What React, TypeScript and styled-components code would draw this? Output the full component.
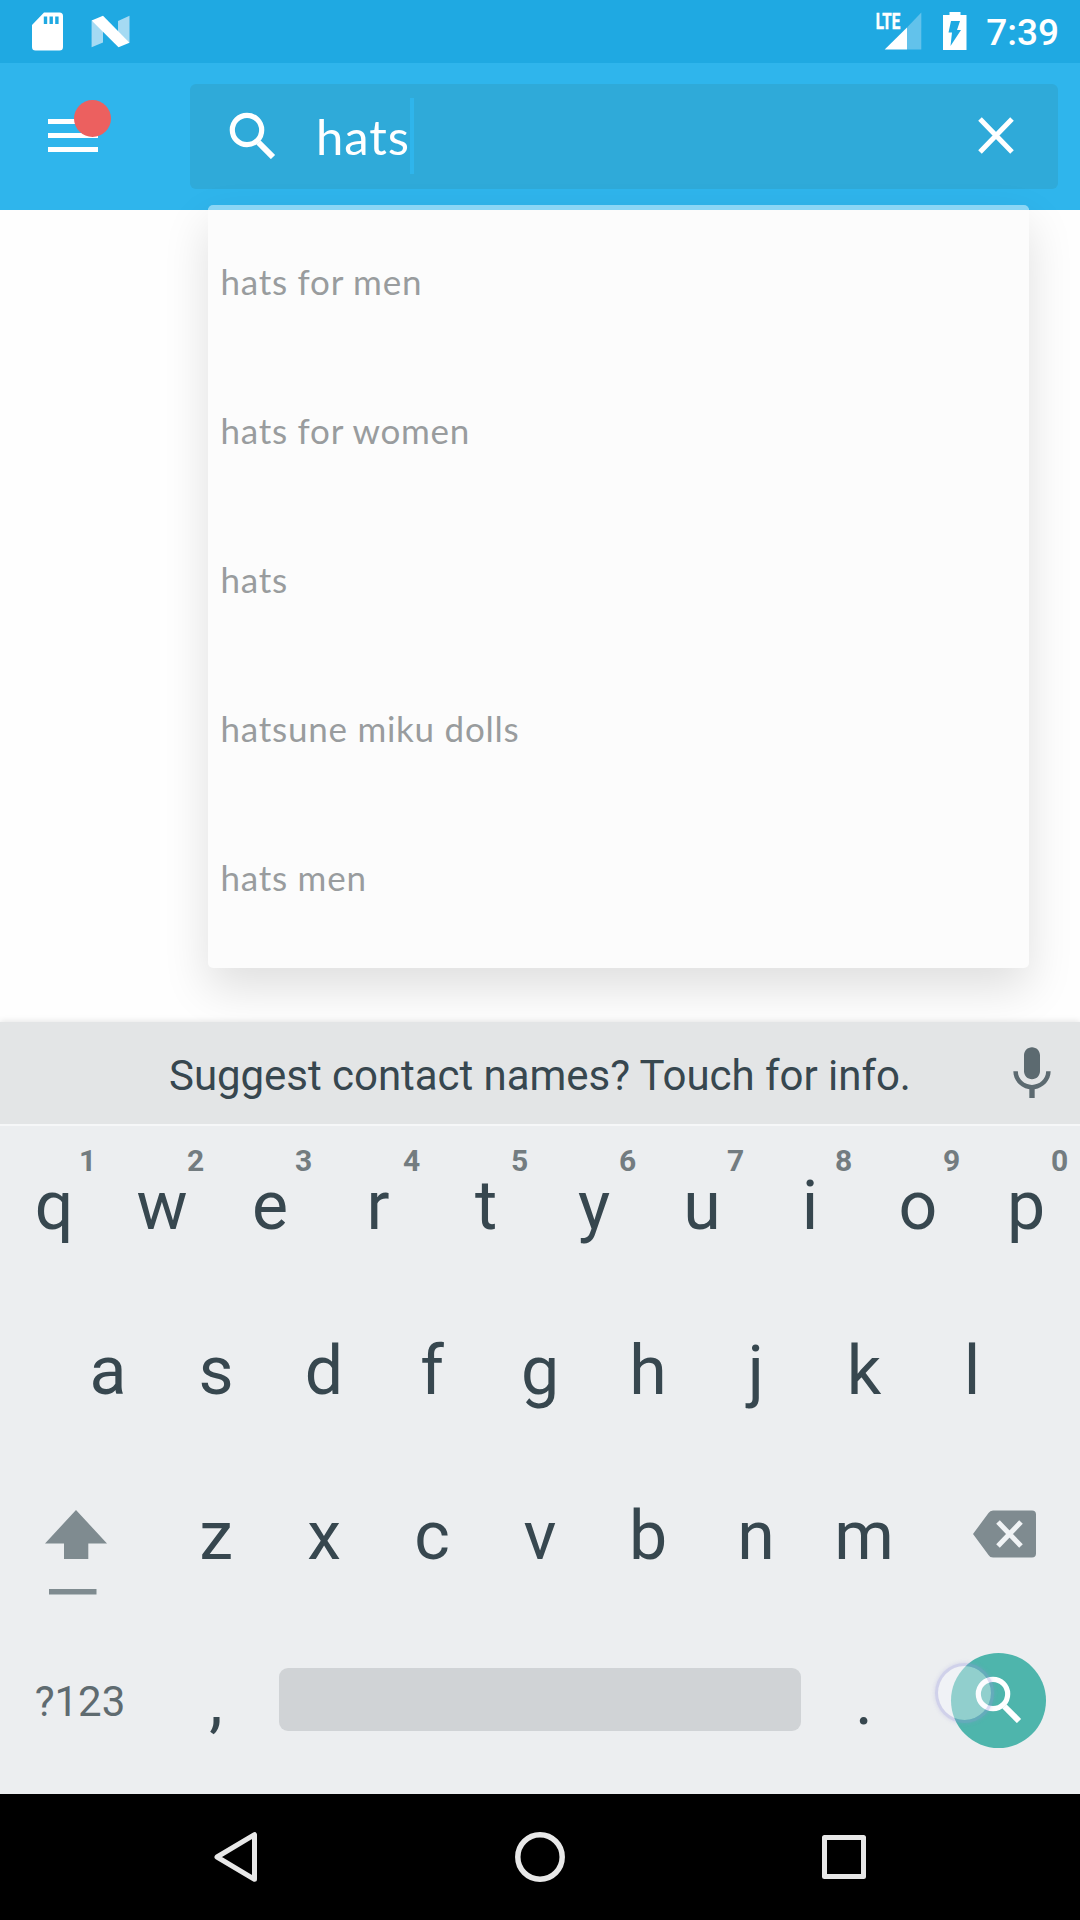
import React from "react";
import styled, { createGlobalStyle } from "styled-components";

const ink = "#37474f";
const muted = "#7f8b90";

const GlobalStyle = createGlobalStyle`
  * { box-sizing: border-box; }
  body { margin: 0; background: #fefefe; }
  button { appearance: none; border: 0; padding: 0; margin: 0; background: none; font: inherit; color: inherit; }
  svg { display: block; flex: none; }
`;

const Screen = styled.main`
  width: 1080px;
  height: 1920px;
  display: flex;
  flex-direction: column;
  overflow: hidden;
  background: #fefefe;
  font-family: Roboto, "Liberation Sans", sans-serif;
`;

const StatusBar = styled.div`
  height: 63px;
  flex: none;
  display: flex;
  justify-content: space-between;
  padding: 0 21px 0 32px;
  background: #1fa9e2;
  color: #fff;
`;

const StatusGroup = styled.div`
  display: flex;
  height: 63px;
`;

const Clock = styled.span`
  margin-left: 18px;
  font-size: 37px;
  font-weight: 500;
  line-height: 66px;
`;

const AppBar = styled.header`
  position: relative;
  height: 147px;
  flex: none;
  display: flex;
  align-items: flex-start;
  padding: 21px 22px 0 48px;
  background: #2fb5ec;
`;

const MenuButton = styled.button`
  position: relative;
  width: 50px;
  height: 33px;
  margin: 35px 92px 0 0;
  display: flex;
  flex-direction: column;
  justify-content: space-between;
`;

const MenuLine = styled.span`
  width: 50px;
  height: 5px;
  background: #fff;
`;

const NoticeDot = styled.span`
  position: absolute;
  left: 26px;
  top: -19px;
  width: 37px;
  height: 37px;
  border-radius: 50%;
  background: #ec605f;
`;

const SearchField = styled.div`
  flex: 1;
  height: 105px;
  display: flex;
  align-items: center;
  padding: 0 44px 2px 39px;
  border-radius: 6px;
  background: #2faad9;
`;

const Query = styled.span`
  margin-left: 40px;
  font-family: Lato, "Open Sans", sans-serif;
  font-size: 49px;
  letter-spacing: 0.9px;
  line-height: 76px;
  color: #fff;
`;

const Caret = styled.span`
  width: 4px;
  height: 76px;
  margin-right: auto;
  background: #2fb5ec;
`;

const Content = styled.section`
  flex: 1;
`;

const SuggestionMenu = styled.ul`
  position: absolute;
  left: 208px;
  top: 142px;
  z-index: 1;
  width: 821px;
  height: 763px;
  margin: 0;
  padding: 0 0 0 12.5px;
  list-style: none;
  border-top: 5px solid #8bd6f5;
  border-radius: 5px;
  background: #fcfcfc;
  box-shadow: 0 20px 46px rgba(0, 0, 0, 0.125);
`;

const Suggestion = styled.li`
  height: 149px;
  font-family: Lato, "Open Sans", sans-serif;
  font-size: 35px;
  letter-spacing: 0.75px;
  line-height: 142px;
  color: #999c9e;
`;

const Keyboard = styled.section`
  position: relative;
  z-index: 2;
  flex: none;
  background: #eceef0;
  box-shadow: 0 -1px 6px rgba(0, 0, 0, 0.1);
`;

const PromptStrip = styled.div`
  height: 104px;
  display: flex;
  align-items: center;
  justify-content: space-between;
  padding: 2px 16px 0 169px;
  border-bottom: 2px solid #f6f7f8;
  background: #e3e5e6;
`;

const Prompt = styled.span`
  font-size: 42px;
  letter-spacing: -0.04px;
  line-height: 100px;
  padding-top: 3px;
  white-space: nowrap;
  color: ${ink};
`;

const KeyRows = styled.div`
  padding-top: 8px;
`;

const KeyRow = styled.div<{ $inset?: number }>`
  display: flex;
  height: 165px;
  padding: 0 ${(p) => p.$inset ?? 0}px;
`;

const Key = styled.button<{ $width?: number }>`
  position: relative;
  width: ${(p) => p.$width ?? 108}px;
  height: 145px;
  flex: none;
  font-size: 68px;
  line-height: 145px;
  text-align: center;
  color: ${ink};
`;

const Hint = styled.span`
  position: absolute;
  left: 67.5px;
  top: 10px;
  width: 40px;
  font-size: 30px;
  font-weight: 700;
  line-height: 34px;
  color: #737c80;
`;

const IconKey = styled(Key)<{ $pad?: string }>`
  display: flex;
  padding: ${(p) => p.$pad ?? "0"};
`;

const SymbolKey = styled(Key)`
  padding-right: 2px;
  font-size: 42px;
  line-height: 143px;
  color: #5f6b70;
`;

const SpaceKey = styled.button`
  width: 522px;
  height: 63px;
  margin: 39px 9px 0;
  border-radius: 9px;
  background: #d0d3d6;
`;

const SearchKey = styled.button`
  position: relative;
  display: flex;
  width: 95px;
  height: 95px;
  margin: 24px 0 0 33px;
  padding: 23px 0 0 24px;
  border-radius: 50%;
  background: #4eb5ac;
`;

const TouchPoint = styled.span`
  position: absolute;
  left: -16px;
  top: 10px;
  width: 59px;
  height: 60px;
  border: 3px solid rgba(150, 150, 220, 0.32);
  border-radius: 50%;
  background: rgba(247, 247, 255, 0.4);
  background-clip: padding-box;
  box-shadow: 0 0 4px rgba(150, 150, 220, 0.3);
`;

const NavBar = styled.nav`
  height: 126px;
  flex: none;
  display: flex;
  align-items: center;
  justify-content: space-between;
  padding: 0 211px;
  background: #000;
`;

function Magnifier() {
  return (
    <svg width="47" height="47" viewBox="0 0 47 47" fill="none" stroke="#fff">
      <circle cx="18" cy="18" r="14.7" strokeWidth="5.2" />
      <path d="M29.5 30.5 44 45" strokeWidth="6" />
    </svg>
  );
}

const digits = "1234567890";
const topRow = "qwertyuiop".split("");
const homeRow = "asdfghjkl".split("");
const lowerRow = "zxcvbnm".split("");
const suggestions = ["hats for men", "hats for women", "hats", "hatsune miku dolls", "hats men"];

export default function App() {
  return (
    <>
      <GlobalStyle />
      <Screen>
        <StatusBar>
          <StatusGroup>
            <svg width="98" height="63" viewBox="32 0 98 63">
              <path fill="#fff" fillRule="evenodd" d="M44 12.5h15.5a3.5 3.5 0 0 1 3.5 3.5v31a3.5 3.5 0 0 1-3.5 3.5h-24a3.5 3.5 0 0 1-3.5-3.5V25zM43.8 16.5v7.5h3.4v-7.5zM49.5 16.5v7.5h3.4v-7.5zM55.2 16.5v7.5h3.4v-7.5z" />
              <path fill="#a5daf3" d="M91.6 20.5 103 28v14.5l-11.4 4.8zM129.5 15.7v27L118 35.5V21z" />
              <path fill="#fff" d="M91.6 20.5 103 15.7l26.5 27-11 4.6z" />
            </svg>
          </StatusGroup>
          <StatusGroup>
            <svg width="92" height="63" viewBox="876 0 92 63">
              <text x="875.8" y="29" fill="#fff" stroke="#fff" strokeWidth="0.5" fontFamily="Roboto" fontWeight="700" fontSize="22" textLength="24.5" lengthAdjust="spacingAndGlyphs">LTE</text>
              <path fill="#62c2eb" d="M907 27.5 921.3 12.5v37H907z" />
              <path fill="#fff" d="M884.7 49.5 907 27.5v22z" />
              <path fill="#fff" d="M949.500 12h11v3h6v35h-23.500V15h6.500z" />
              <path fill="#1fa9e2" d="M951 21h9l-3 9h4l-10.500 16 1.500-13.500h-3.500z" />
            </svg>
            <Clock>7:39</Clock>
          </StatusGroup>
        </StatusBar>

        <AppBar>
          <MenuButton aria-label="Menu">
            <MenuLine />
            <MenuLine />
            <MenuLine />
            <NoticeDot />
          </MenuButton>
          <SearchField>
            <Magnifier />
            <Query>hats</Query>
            <Caret />
            <svg width="36" height="37" viewBox="0 0 36 37" fill="none" stroke="#fff" strokeWidth="5">
              <path d="M2 2l32 33M34 2 2 35" />
            </svg>
          </SearchField>
          <SuggestionMenu>
            {suggestions.map((s) => (
              <Suggestion key={s}>{s}</Suggestion>
            ))}
          </SuggestionMenu>
        </AppBar>

        <Content />

        <Keyboard>
          <PromptStrip>
            <Prompt>Suggest contact names? Touch for info.</Prompt>
            <svg width="64" height="64" viewBox="0 0 24 24" fill="#5c6a70">
              <path d="M12 14c1.660 0 3-1.340 3-3V5c0-1.660-1.340-3-3-3S9 3.340 9 5v6c0 1.660 1.340 3 3 3zm5.300-3c0 3-2.540 5.100-5.300 5.100S6.700 14 6.700 11H5c0 3.410 2.720 6.230 6 6.720V21h2v-3.280c3.280-.480 6-3.300 6-6.720h-1.700z" />
            </svg>
          </PromptStrip>
          <KeyRows>
            <KeyRow>
              {topRow.map((k, i) => (
                <Key key={k}>
                  {k}
                  <Hint>{digits[i]}</Hint>
                </Key>
              ))}
            </KeyRow>
            <KeyRow $inset={54}>
              {homeRow.map((k) => (
                <Key key={k}>{k}</Key>
              ))}
            </KeyRow>
            <KeyRow>
              <IconKey $width={162} $pad="46px 0 0 45px" aria-label="Shift">
                <svg width="62" height="85" viewBox="0 0 62 85" fill={muted}>
                  <path d="M31 0l31 33.500H43.300V49H19V33.500H0zM4 79h47.500v5.500H4z" />
                </svg>
              </IconKey>
              {lowerRow.map((k) => (
                <Key key={k}>{k}</Key>
              ))}
              <IconKey $width={162} $pad="46px 0 0 55px" aria-label="Delete">
                <svg width="63" height="48" viewBox="0 0 63 48">
                  <path fill={muted} d="M20 .5h39a4 4 0 0 1 4 4v39a4 4 0 0 1-4 4H20q-3 0-4.500-2.500L0 24 15.500 3Q17 .5 20 .5z" />
                  <path d="M25 12l23 24M48 12 25 36" stroke="#f0f3f5" strokeWidth="5" />
                </svg>
              </IconKey>
            </KeyRow>
            <KeyRow>
              <SymbolKey $width={162}>?123</SymbolKey>
              <Key>,</Key>
              <SpaceKey aria-label="Space" />
              <Key>.</Key>
              <SearchKey aria-label="Search">
                <Magnifier />
                <TouchPoint />
              </SearchKey>
            </KeyRow>
          </KeyRows>
        </Keyboard>

        <NavBar>
          <svg width="50" height="52" viewBox="0 0 50 52" fill="none" stroke="#e8e8e8" strokeWidth="5" strokeLinejoin="round">
            <path d="M43.500 3.700v44.600L6 26z" />
          </svg>
          <svg width="52" height="52" viewBox="0 0 52 52" fill="none" stroke="#e8e8e8" strokeWidth="5.500">
            <circle cx="26" cy="26" r="22.200" />
          </svg>
          <svg width="50" height="52" viewBox="0 0 50 52" fill="none" stroke="#e8e8e8" strokeWidth="5" strokeLinejoin="round">
            <path d="M5.500 6.500h39v39h-39z" />
          </svg>
        </NavBar>
      </Screen>
    </>
  );
}
